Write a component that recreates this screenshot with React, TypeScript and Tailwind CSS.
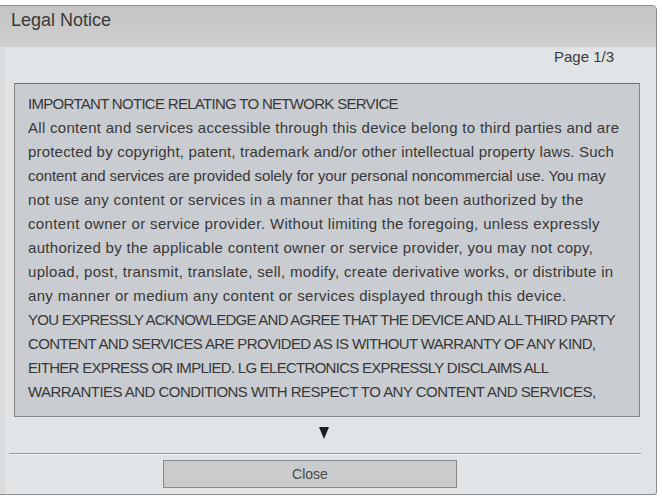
import React from 'react';

const lines: { text: string; track: string }[] = [
  { text: 'IMPORTANT NOTICE RELATING TO NETWORK SERVICE', track: 'tracking-[-0.7px]' },
  { text: 'All content and services accessible through this device belong to third parties and are', track: 'tracking-[0.29px]' },
  { text: 'protected by copyright, patent, trademark and/or other intellectual property laws. Such', track: 'tracking-[0.19px]' },
  { text: 'content and services are provided solely for your personal noncommercial use. You may', track: 'tracking-[-0.08px]' },
  { text: 'not use any content or services in a manner that has not been authorized by the', track: 'tracking-[0.32px]' },
  { text: 'content owner or service provider. Without limiting the foregoing, unless expressly', track: 'tracking-[0.36px]' },
  { text: 'authorized by the applicable content owner or service provider, you may not copy,', track: 'tracking-[0.3px]' },
  { text: 'upload, post, transmit, translate, sell, modify, create derivative works, or distribute in', track: 'tracking-[0.33px]' },
  { text: 'any manner or medium any content or services displayed through this device.', track: 'tracking-[0.32px]' },
  { text: 'YOU EXPRESSLY ACKNOWLEDGE AND AGREE THAT THE DEVICE AND ALL THIRD PARTY', track: 'tracking-[-0.74px]' },
  { text: 'CONTENT AND SERVICES ARE PROVIDED AS IS WITHOUT WARRANTY OF ANY KIND,', track: 'tracking-[-0.64px]' },
  { text: 'EITHER EXPRESS OR IMPLIED. LG ELECTRONICS EXPRESSLY DISCLAIMS ALL', track: 'tracking-[-0.72px]' },
  { text: 'WARRANTIES AND CONDITIONS WITH RESPECT TO ANY CONTENT AND SERVICES,', track: 'tracking-[-0.54px]' },
];

const App: React.FC = () => {
  return (
    <div className="w-[662px] h-[498px] bg-white font-['Liberation_Sans',Arial,sans-serif] overflow-hidden">
      <div className="mt-[5px] w-[657px] h-[490px] border border-l-0 border-[#8c8c8c] rounded-tr-[5px] rounded-br-[3px] flex flex-col overflow-hidden bg-[#e1e4e7]">
        {/* Title */}
        <div className="h-[41px] shrink-0 bg-gradient-to-b from-[#c4c4c4] to-[#cfcfcf] pl-[11px] pt-[3px] text-[18px] leading-[22px] text-[#3a3a3a]">
          Legal Notice
        </div>

        <div className="flex-1 flex flex-col border-l-[5px] border-[#d9dbdd]">
          {/* Page */}
          <div className="h-[36px] shrink-0 pt-[1px] pr-[42px] text-right text-[15px] leading-[18px] text-[#3a3a3a]">
            Page 1/3
          </div>

          {/* Text */}
          <div className="ml-[9px] w-[626px] h-[334px] shrink-0 border border-[#858585] border-t-[#707070] bg-[#c9ccd0] pl-[13px] pt-[8px] text-[15px] leading-[24px] text-[#383838]">
            {lines.map((l, i) => (
              <div key={i} className={`whitespace-nowrap ${l.track}`}>
                {l.text}
              </div>
            ))}
          </div>

          {/* Arrow */}
          <div className="h-[36px] shrink-0 flex justify-center pt-[10px]">
            <svg width="10" height="12" viewBox="0 0 10 12" className="ml-[-14px]">
              <polygon points="0,0 10,0 5,12" fill="#1e1e1e" />
            </svg>
          </div>

          {/* Separator */}
          <div className="ml-[4px] mr-[15px] h-[2px] bg-[#999b9d] border-b border-[#f0f1f2]" />

          {/* Button */}
          <div className="pt-[5px] pl-[158px]">
            <div className="w-[294px] h-[28px] border border-[#8a8a8a] bg-[#c9cbcd] flex items-center justify-center text-[14px] text-[#4a4a4a]">
              Close
            </div>
          </div>
        </div>
      </div>
    </div>
  );
};

export default App;
